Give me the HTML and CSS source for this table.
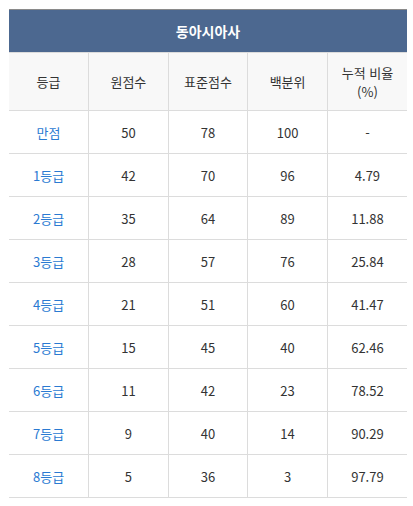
FILE: index.html
```html
<!DOCTYPE html>
<html lang="ko">
<head>
<meta charset="utf-8">
<link rel="stylesheet" href="styles.css">
</head>
<body>
<div class="wrap">
<table class="grade-table">
  <thead>
    <tr><th class="title" colspan="5">동아시아사</th></tr>
    <tr class="head">
      <th>등급</th><th>원점수</th><th>표준점수</th><th>백분위</th><th>누적 비율<br>(%)</th>
    </tr>
  </thead>
  <tbody>
    <tr><td class="g">만점</td><td>50</td><td>78</td><td>100</td><td>-</td></tr>
    <tr><td class="g">1등급</td><td>42</td><td>70</td><td>96</td><td>4.79</td></tr>
    <tr><td class="g">2등급</td><td>35</td><td>64</td><td>89</td><td>11.88</td></tr>
    <tr><td class="g">3등급</td><td>28</td><td>57</td><td>76</td><td>25.84</td></tr>
    <tr><td class="g">4등급</td><td>21</td><td>51</td><td>60</td><td>41.47</td></tr>
    <tr><td class="g">5등급</td><td>15</td><td>45</td><td>40</td><td>62.46</td></tr>
    <tr><td class="g">6등급</td><td>11</td><td>42</td><td>23</td><td>78.52</td></tr>
    <tr><td class="g">7등급</td><td>9</td><td>40</td><td>14</td><td>90.29</td></tr>
    <tr><td class="g">8등급</td><td>5</td><td>36</td><td>3</td><td>97.79</td></tr>
  </tbody>
</table>
</div>
</body>
</html>
```
FILE: styles.css
```css
html, body { margin: 0; padding: 0; background: #fff; }
.wrap { padding: 9px 6px 0 9px; }
.grade-table {
  width: 398px;
  border-collapse: collapse;
  table-layout: fixed;
  font-family: "Noto Sans CJK KR", "Noto Sans", sans-serif;
  font-size: 13px;
  color: #333;
}
.grade-table th, .grade-table td {
  text-align: center;
  vertical-align: middle;
  padding: 0;
  border: 1px solid #dcdcdc;
  font-weight: normal;
  line-height: 19px;
}
.grade-table tr > :first-child { border-left: none; }
.grade-table tr > :last-child { border-right: none; }
.grade-table th.title {
  background: #4c6890;
  color: #fff;
  font-weight: bold;
  font-size: 14px;
  height: 42px;
  border-top: 1px solid #8a8a8a;
  border-bottom: 1px solid #dcdcdc;
}
.head th {
  background: #f8f8f8;
  height: 57px;
  color: #333;
}
.grade-table td { height: 42px; }
.grade-table td.g { color: #2a7ad2; }
```
